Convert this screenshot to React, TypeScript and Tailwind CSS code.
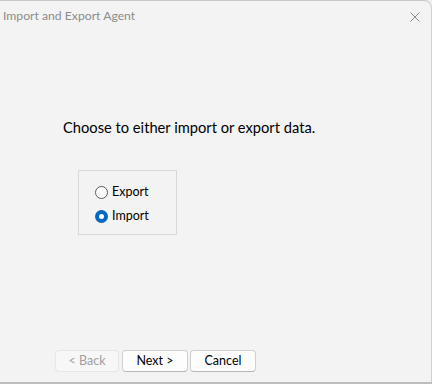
import React from "react";

export default function App() {
  const font = { fontFamily: '"Segoe UI", Lato, "Noto Sans", sans-serif' };
  return (
    <div className="w-[432px] h-[384px] bg-[#f0f0f0] overflow-hidden" style={font}>
      <div className="w-[432px] h-[382px] bg-[#f3f3f3] border-t border-[#c8c8c8] rounded-tr-[8px] border-r border-r-[#d0d0d0] flex flex-col">
        <div className="h-[31px] flex items-center justify-between pl-[3px] pr-[10px]">
          <span className="text-[12.2px] text-[#8c8c8c] leading-none">Import and Export Agent</span>
          <svg width="10" height="10" viewBox="0 0 10 10" className="mr-[1px]">
            <path d="M0.5 0.5 L9.5 9.5 M9.5 0.5 L0.5 9.5" stroke="#8a8a8a" strokeWidth="1" fill="none" />
          </svg>
        </div>
        <div className="flex-1 flex flex-col pl-[63px]">
          <div className="mt-[85px] text-[14.7px] text-black leading-[20px]">Choose to either import or export data.</div>
          <div className="mt-[33px] ml-[15px] w-[99px] h-[65px] border border-[#d8d8d8] flex flex-col pl-[16px] pt-[12px] gap-[6px]">
            <label className="flex items-center gap-[4px] text-[12.5px] text-black leading-[18px]">
              <span className="w-[13px] h-[13px] rounded-full border border-[#5c5c5c] bg-white" />
              Export
            </label>
            <label className="flex items-center gap-[4px] text-[12.5px] text-black leading-[18px]">
              <span className="w-[13px] h-[13px] rounded-full bg-[#0067c0] flex items-center justify-center">
                <span className="w-[5px] h-[5px] rounded-full bg-white" />
              </span>
              Import
            </label>
          </div>
        </div>
        <div className="flex pl-[55px] pb-[10px]">
          <button className="w-[64px] h-[22px] rounded-[4px] border border-[#e6e6e6] bg-[#f7f7f7] text-[12.5px] text-[#a0a0a0] leading-none">&lt; Back</button>
          <button className="ml-[3px] w-[66px] h-[22px] rounded-[4px] border border-[#d0d0d0] border-b-[#b8b8b8] bg-[#fdfdfd] text-[12.5px] text-black leading-none">Next &gt;</button>
          <button className="ml-[2px] w-[66px] h-[22px] rounded-[4px] border border-[#d0d0d0] border-b-[#b8b8b8] bg-[#fdfdfd] text-[12.5px] text-black leading-none">Cancel</button>
        </div>
      </div>
      <div className="h-[2px] bg-[#bdbdbd]" />
    </div>
  );
}
